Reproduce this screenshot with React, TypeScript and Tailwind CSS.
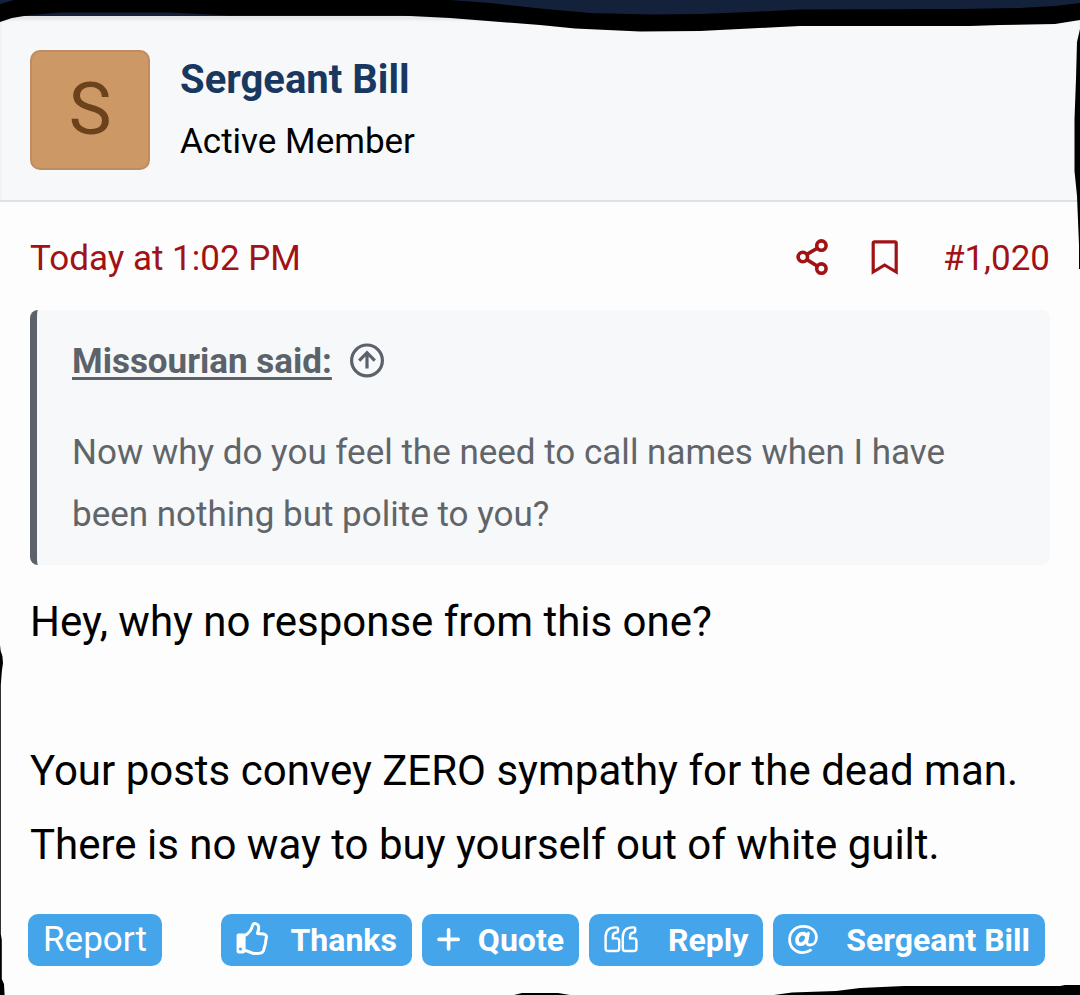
import React from "react";

interface IconProps {
  className?: string;
}

const ShareIcon = ({ className }: IconProps) => (
  <svg viewBox="0 0 32 36" className={className} fill="none" stroke="currentColor" strokeWidth="3.6" aria-hidden="true">
    <circle cx="6.8" cy="16" r="4.7" />
    <circle cx="25.4" cy="4.6" r="4.7" />
    <circle cx="25.4" cy="27.6" r="4.7" />
    <path d="M10.8 13.4 21.2 7.2M10.8 18.6 21.2 25" />
  </svg>
);

const BookmarkIcon = ({ className }: IconProps) => (
  <svg viewBox="0 0 28 36" className={className} fill="none" stroke="currentColor" strokeWidth="3.2" aria-hidden="true">
    <path d="M4.6 .8H24.8Q26.2 .8 26.2 2.2V31L14.6 24 3.2 31V2.2Q3.2 .8 4.6 .8Z" />
  </svg>
);

const ArrowCircleUpIcon = ({ className }: IconProps) => (
  <svg viewBox="0 0 36 36" className={className} fill="none" stroke="currentColor" strokeWidth="3.2" aria-hidden="true">
    <circle cx="18" cy="16.4" r="15.4" />
    <path d="M18 24.4V8.9M10.2 16.6 18 8.7 25.8 16.6" />
  </svg>
);

const ThumbsUpIcon = ({ className }: IconProps) => (
  <svg viewBox="0 2 32 34" className={className} fill="none" stroke="currentColor" strokeWidth="3" strokeLinejoin="round" aria-hidden="true">
    <path d="M.6 14.4Q.6 12.6 2.4 12.6H9.6V30.6Q9 32.4 7.2 32.4H2.4Q.6 32.4 .6 30.6Z" fill="currentColor" stroke="none" />
    <circle cx="4.4" cy="28" r="1.6" fill="#45a5ea" stroke="none" />
    <path d="M9 14.6C12.8 12.2 15.4 9 16.4 5 17 2.8 18 2.4 19.4 2.6 22.6 3.2 23.2 6 22.4 9L21.4 12.4 27.4 13C30.4 13.6 31.2 15.8 30 18L29.4 22.6 28 27.8C27.6 31.4 26 32 23.4 32.2L18 32.4C14.4 32.2 12.6 29.8 9 29.4" />
  </svg>
);

const PlusIcon = ({ className }: IconProps) => (
  <svg viewBox="0 0 24 24" className={className} fill="none" stroke="currentColor" strokeWidth="3.6" strokeLinecap="round" aria-hidden="true">
    <path d="M11.6 1.8V21M2 11.4H21.2" />
  </svg>
);

const QuoteIcon = ({ className }: IconProps) => (
  <svg viewBox="0 0 34 28" className={className} fill="none" stroke="currentColor" strokeWidth="2.4" strokeLinejoin="round" aria-hidden="true">
    <path d="M11.4 1.4H12.4Q14 1.4 14 3V5Q14 6.4 12.4 6.5 8.8 6.8 8.8 10.4V12.4H12.6Q15.2 12.4 15.2 15V22.4Q15.2 25 12.6 25H4.2Q1.6 25 1.6 22.4V11.2Q1.6 1.4 11.4 1.4Z" />
    <path d="M28.6 1.4H29.6Q31.2 1.4 31.2 3V5Q31.2 6.4 29.6 6.5 26 6.8 26 10.4V12.4H29.8Q32.4 12.4 32.4 15V22.4Q32.4 25 29.8 25H21.4Q18.8 25 18.8 22.4V11.2Q18.8 1.4 28.6 1.4Z" />
  </svg>
);

const AtIcon = ({ className }: IconProps) => (
  <svg viewBox="0 0 30 30" className={className} fill="none" stroke="currentColor" strokeWidth="2.8" strokeLinecap="round" strokeLinejoin="round" aria-hidden="true">
    <path d="M22.6 25.2C20.4 26.8 17.8 27.6 14.8 27.6 7 27.6 1.6 22 1.6 14.4 1.6 6.8 7.6 1.4 15.2 1.4 23 1.4 28.4 6 28.4 12.4 28.4 17.2 25.4 20 21.8 20 19.2 20 18.4 18.6 18.9 16.2L20.4 8.2" />
    <path strokeWidth="3.6" d="M19 12.2C18.4 9.8 17 8.6 14.8 8.6 11.6 8.6 9 11.4 9 15 9 17.8 10.4 19.2 12.6 19.2 15.8 19.2 18.6 16.2 19 12.2Z" />
  </svg>
);

const actions = [
  { label: "Thanks", icon: <ThumbsUpIcon className="w-8 h-[34px] overflow-visible" />, gap: "gap-[23px]" },
  { label: "Quote", icon: <PlusIcon className="w-6 h-6" />, gap: "gap-[17px]" },
  { label: "Reply", icon: <QuoteIcon className="w-[34px] h-7" />, gap: "gap-[30px]" },
  { label: "Sergeant Bill", icon: <AtIcon className="w-[30px] h-[30px]" />, gap: "gap-7" },
];

// Hand-drawn marker strokes along the page edges
const MarkerStrokes = () => (
  <div className="absolute inset-0 overflow-hidden pointer-events-none" aria-hidden="true">
    <svg viewBox="0 0 1080 34" preserveAspectRatio="none" className="absolute top-0 left-0 w-full h-[34px]">
      <path d="M0 4 14 0H450L490 3 540 8.5 590 13 650 14.5 700 14 750 12 800 9.5 960 9 1020 8 1055 6 1080 3V20L1055 24 1000 25 970 26H800L770 27.5 700 31 640 31.5 575 28.5 540 25 450 18 400 15.5H230L170 12.5H60L30 15 12 18 0 22Z" />
    </svg>
    <svg viewBox="0 0 6 240" className="absolute top-[29px] right-0 w-[6px] h-[240px]">
      <path d="M6 0 3 13 2 50 .5 90V142L3 167 5 216V240H6Z" />
    </svg>
    <svg viewBox="0 0 5 352" className="absolute top-[643px] left-0 w-[5px] h-[352px]">
      <path d="M0 2 .7 8 2.4 13 3 20 2 27 1.4 34 .8 42V291L1.8 297V336L4 341 4.6 352H0Z" />
    </svg>
    <svg viewBox="0 0 566 10" className="absolute bottom-0 right-0 w-[566px] h-[10px]">
      <path d="M0 10 8 8H44L56 10ZM260 10 278 7.5 322 6 346 3 390 1H546L551 0H566V10Z" />
    </svg>
  </div>
);

export default function App() {
  return (
    <div className="relative min-h-screen bg-[#fdfdfd] text-black font-['Roboto',sans-serif]">
      <div className="h-4 bg-[#13213a]" />

      <article>
        <header className="flex items-start gap-[30px] px-[30px] pt-[34px] pb-[26px] border-b-2 border-[#e0e1e3] bg-[#f6f8fa] shadow-[inset_0_4px_3px_#e6e5e8]">
          <a
            href="#member"
            aria-label="Sergeant Bill profile"
            className="flex items-center justify-center shrink-0 w-[120px] h-[120px] rounded-[10px] bg-[#cc9966] border-2 border-[#c08b61] text-[#6b421b] text-[72px] leading-none"
          >
            S
          </a>
          <div>
            <h1 className="text-[40px] leading-[60px] font-bold text-[#193860]">
              <a href="#member">Sergeant Bill</a>
            </h1>
            <p className="text-[35px] leading-[64px]">Active Member</p>
          </div>
        </header>

        <div className="px-[30px] pt-[31px]">
          <div className="flex items-center justify-between text-[35px] leading-[52px] text-[#a11214]">
            <a href="#post">
              <time>Today at 1:02 PM</time>
            </a>
            <div className="flex items-center">
              <button type="button" aria-label="Share">
                <ShareIcon className="w-8 h-9 overflow-visible" />
              </button>
              <button type="button" aria-label="Bookmark" className="ml-[42px]">
                <BookmarkIcon className="w-7 h-9 overflow-visible" />
              </button>
              <a href="#post" className="ml-[45px]">#1,020</a>
            </div>
          </div>

          <blockquote className="mt-[25px] pl-[35px] pr-8 pt-[21px] pb-[19px] rounded-lg border-l-[7px] border-[#5c6269] bg-[#f6f8fa] text-[35px] leading-[62px] text-[#616569]">
            <a href="#quoted" className="flex items-center gap-[17px] font-bold text-[#5c6269]">
              <span className="underline decoration-[3px] underline-offset-4">Missourian said:</span>
              <ArrowCircleUpIcon className="w-9 h-9 overflow-visible" />
            </a>
            <p className="mt-[29px] max-w-[900px]">
              Now why do you feel the need to call names when I have been nothing but polite to you?
            </p>
          </blockquote>

          <div className="mt-5 text-[42px] leading-[74px]">
            <p>Hey, why no response from this one?</p>
            <p className="mt-[75px]">
              Your posts convey ZERO sympathy for the dead man.
              <br />
              There is no way to buy yourself out of white guilt.
            </p>
          </div>
        </div>

        <footer className="flex items-center justify-between pl-7 pr-[35px] pt-8 pb-7 leading-[52px] text-white">
          <button type="button" className="px-[15px] rounded-[10px] bg-[#45a5ea] text-[35px]">
            Report
          </button>
          <div className="flex gap-[10px] text-[32px]">
            {actions.map((action) => (
              <button
                key={action.label}
                type="button"
                className={`flex items-center px-[15px] rounded-[10px] bg-[#45a5ea] font-bold whitespace-nowrap ${action.gap}`}
              >
                {action.icon}
                {action.label}
              </button>
            ))}
          </div>
        </footer>
      </article>

      <MarkerStrokes />
    </div>
  );
}
